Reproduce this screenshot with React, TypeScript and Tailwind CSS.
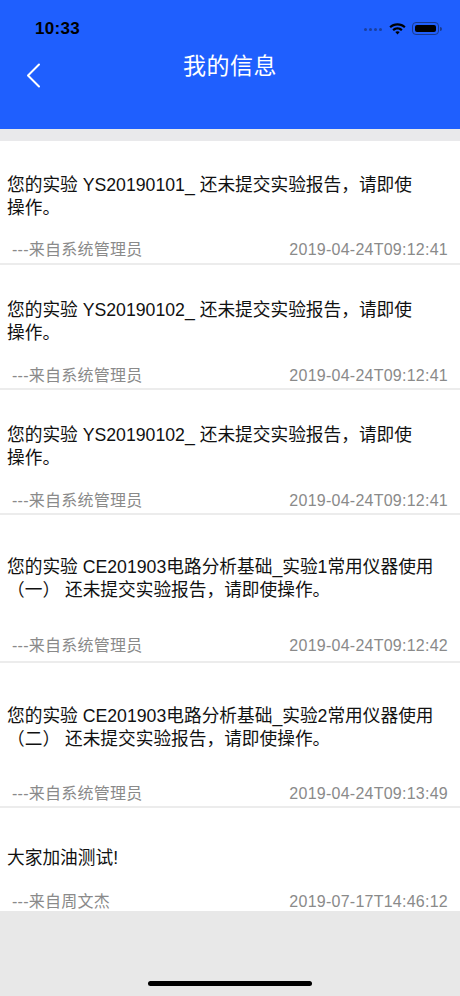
const messages = [
    {
        lines: ["您的实验 YS20190101_ 还未提交实验报告，请即使", "操作。"],
        from: "---来自系统管理员",
        time: "2019-04-24T09:12:41",
        box: "h-[124px] pt-[33px]",
        gap: "mt-[20px]",
    },
    {
        lines: ["您的实验 YS20190102_ 还未提交实验报告，请即使", "操作。"],
        from: "---来自系统管理员",
        time: "2019-04-24T09:12:41",
        box: "h-[125px] pt-[34px]",
        gap: "mt-[21px]",
    },
    {
        lines: ["您的实验 YS20190102_ 还未提交实验报告，请即使", "操作。"],
        from: "---来自系统管理员",
        time: "2019-04-24T09:12:41",
        box: "h-[125px] pt-[34px]",
        gap: "mt-[21px]",
    },
    {
        lines: ["您的实验 CE201903电路分析基础_实验1常用仪器使用", "（一） 还未提交实验报告，请即使操作。"],
        from: "---来自系统管理员",
        time: "2019-04-24T09:12:42",
        box: "h-[148px] pt-[41px]",
        gap: "mt-[34px]",
    },
    {
        lines: ["您的实验 CE201903电路分析基础_实验2常用仪器使用", "（二） 还未提交实验报告，请即使操作。"],
        from: "---来自系统管理员",
        time: "2019-04-24T09:13:49",
        box: "h-[145px] pt-[42px]",
        gap: "mt-[33px]",
    },
    {
        lines: ["大家加油测试!"],
        from: "---来自周文杰",
        time: "2019-07-17T14:46:12",
        box: "h-[130px] pt-[39px]",
        gap: "mt-[22px]",
    },
];

const font = { fontFamily: '"Liberation Sans", "Noto Sans CJK SC", sans-serif' };

const StatusBar = () => (
    <div className="h-[54px] flex items-center justify-between pl-[35px] pr-[18px] pt-[3px]">
        <span className="text-[17px] font-semibold text-black tracking-[0.3px]">10:33</span>
        <div className="flex items-center gap-[6px]">
            {/* no-signal dots */}
            <div className="flex items-center gap-[2px] mt-[2px] mr-[1px]">
                {[0, 1, 2, 3].map((i) => (
                    <span key={i} className="w-[3px] h-[3px] rounded-full bg-[#1a3f9e]" />
                ))}
            </div>
            <svg width="17" height="12" viewBox="0 0 17 12" fill="black">
                <path d="M8.5 0.3C5.3 0.3 2.5 1.5 0.4 3.5l1.5 1.5C3.6 3.4 5.9 2.4 8.5 2.4s4.9 1 6.6 2.6l1.5-1.5C14.5 1.5 11.7 0.3 8.5 0.3z" />
                <path d="M8.5 4.3c-2 0-3.8 0.8-5.1 2.1l1.5 1.5c0.9-0.9 2.2-1.5 3.6-1.5s2.7 0.6 3.6 1.5l1.5-1.5C12.3 5.1 10.5 4.3 8.5 4.3z" />
                <path d="M8.5 8.2c-0.9 0-1.7 0.4-2.2 0.9L8.5 11.4l2.2-2.3C10.2 8.6 9.4 8.2 8.5 8.2z" />
            </svg>
            <div className="flex items-center">
                <div className="w-[27px] h-[13px] rounded-[4px] border border-[#1a3a8c] p-[2px]">
                    <div className="w-full h-full rounded-[2px] bg-black" />
                </div>
                <div className="w-[2px] h-[4px] rounded-r-sm bg-[#1a3a8c] ml-[1px]" />
            </div>
        </div>
    </div>
);

const App = () => {
    return (
        <div className="w-[460px] h-[996px] flex flex-col bg-[#e8e8e8] overflow-hidden" style={font}>
            <div className="h-[129px] bg-[#1f5ffe] flex flex-col">
                <StatusBar />
                <div className="relative flex justify-center">
                    <svg
                        className="absolute left-[26px] top-[9px]"
                        width="15"
                        height="25"
                        viewBox="0 0 15 25"
                        fill="none"
                        stroke="white"
                        strokeWidth="2"
                        strokeLinecap="round"
                        strokeLinejoin="round"
                    >
                        <path d="M13 1.5L2 12.5l11 11" />
                    </svg>
                    <h1 className="text-[23px] leading-[24px] text-white tracking-[0.5px]">我的信息</h1>
                </div>
            </div>
            <div className="h-[12px] bg-[#e9e9eb]" />
            <div className="h-[770px] bg-white overflow-hidden">
                {messages.map((msg, index) => (
                    <div key={index} className={`flex flex-col ${msg.box}`}>
                        <div className="px-[7px] text-[17.7px] leading-[23px] text-[#111]">
                            {msg.lines.map((line, i) => (
                                <p key={i} className="whitespace-nowrap">
                                    {line}
                                </p>
                            ))}
                        </div>
                        <div
                            className={`flex justify-between pl-[12px] pr-[12px] text-[16px] leading-[20px] tracking-[0.25px] text-[#8a8a8a] ${msg.gap}`}
                        >
                            <span>{msg.from}</span>
                            <span>{msg.time}</span>
                        </div>
                        <div className="mt-auto h-[2px] bg-[#ececec]" />
                    </div>
                ))}
            </div>
            <div className="flex-1 flex items-end justify-center pb-[10px]">
                <div className="w-[164px] h-[5px] rounded-full bg-black" />
            </div>
        </div>
    );
};

export default App;
